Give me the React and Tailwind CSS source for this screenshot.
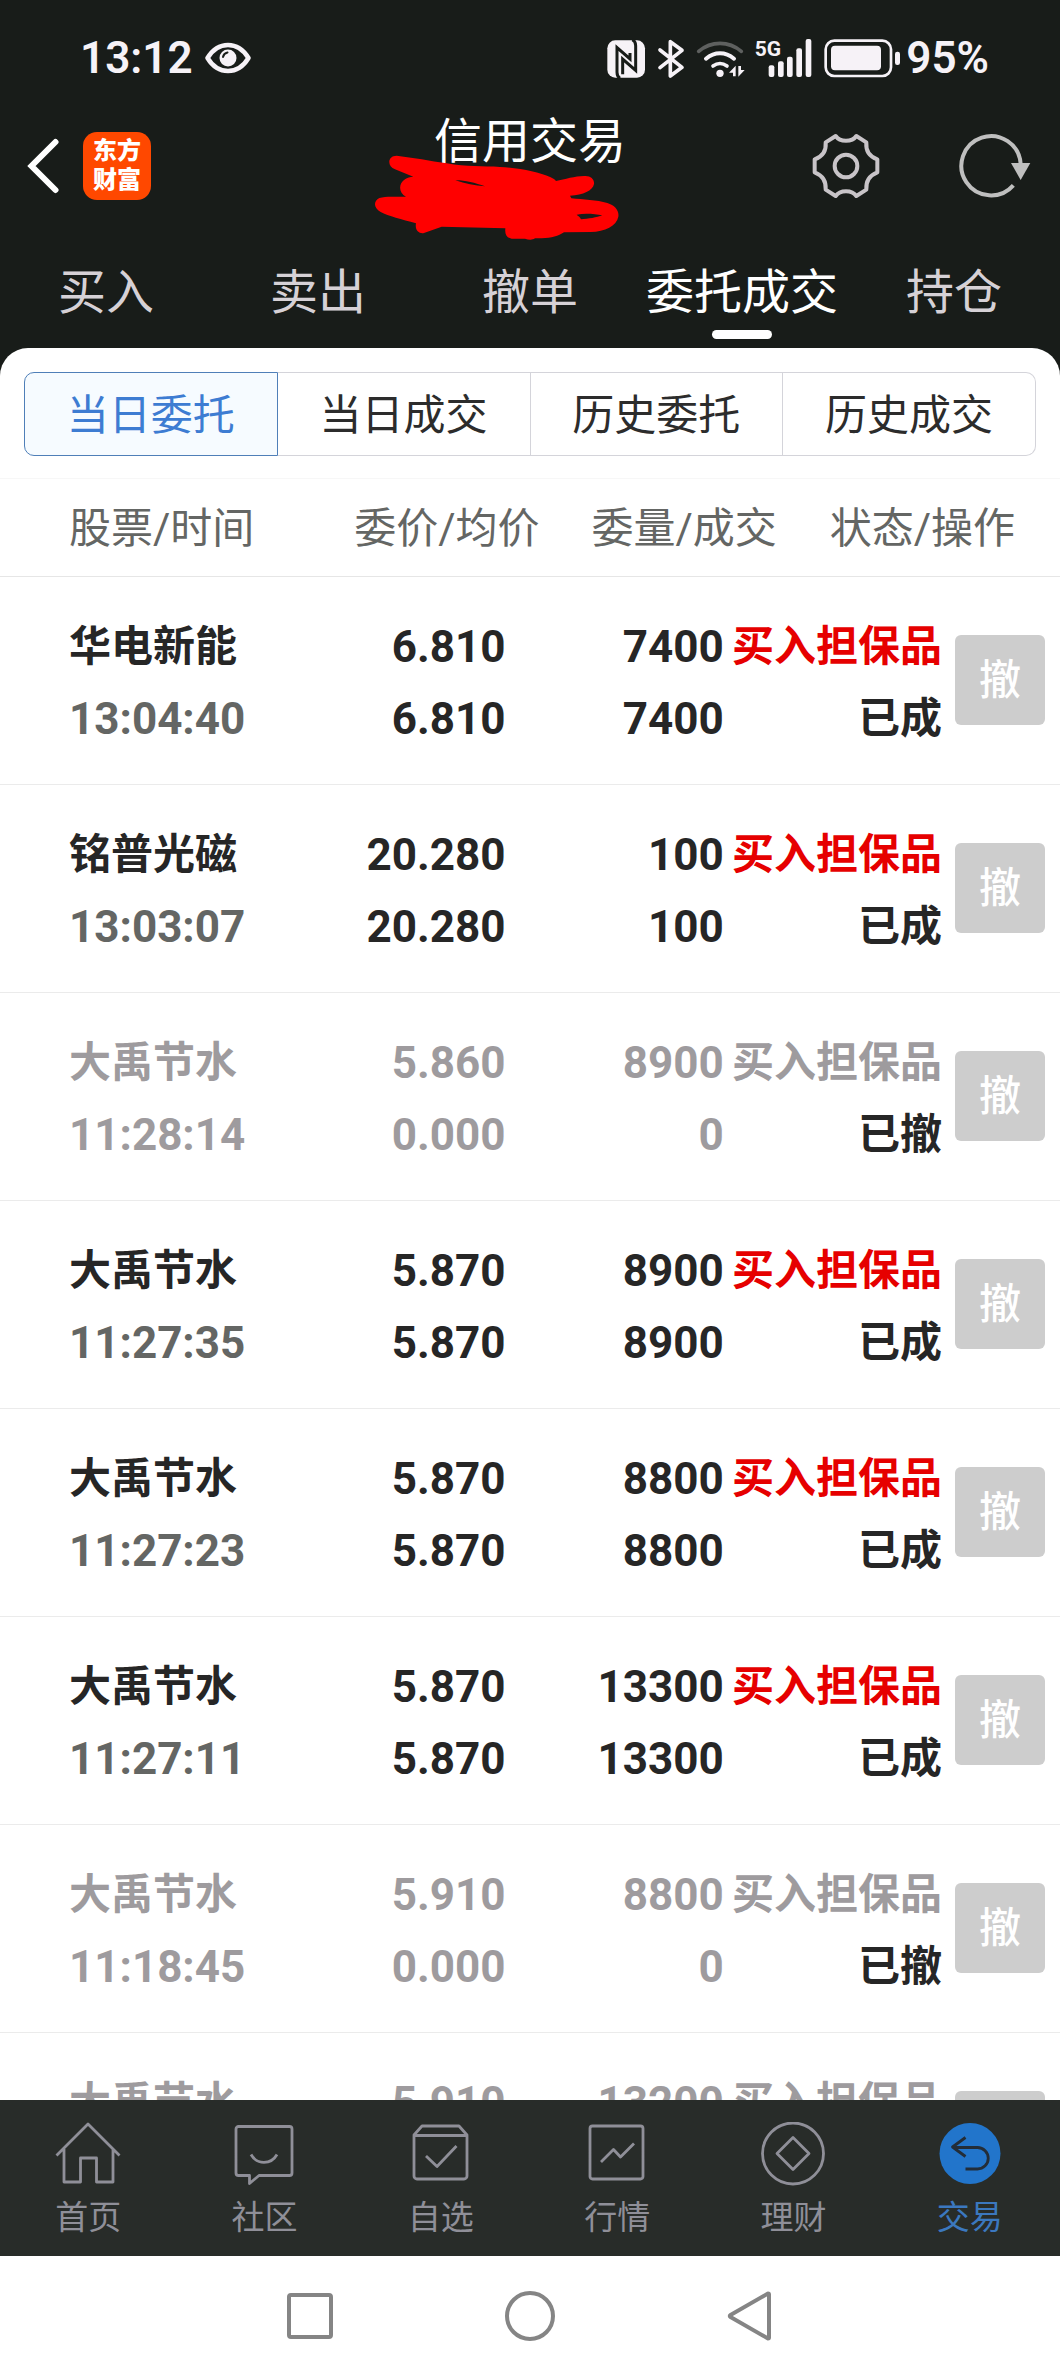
import React from "react";

const tabs = ["买入", "卖出", "撤单", "委托成交", "持仓"];
const segments = ["当日委托", "当日成交", "历史委托", "历史成交"];
const columns = ["股票/时间", "委价/均价", "委量/成交", "状态/操作"];

const orders = [
  { name: "华电新能", time: "13:04:40", price: "6.810", avg: "6.810", qty: "7400", filled: "7400", status: "已成" },
  { name: "铭普光磁", time: "13:03:07", price: "20.280", avg: "20.280", qty: "100", filled: "100", status: "已成" },
  { name: "大禹节水", time: "11:28:14", price: "5.860", avg: "0.000", qty: "8900", filled: "0", status: "已撤" },
  { name: "大禹节水", time: "11:27:35", price: "5.870", avg: "5.870", qty: "8900", filled: "8900", status: "已成" },
  { name: "大禹节水", time: "11:27:23", price: "5.870", avg: "5.870", qty: "8800", filled: "8800", status: "已成" },
  { name: "大禹节水", time: "11:27:11", price: "5.870", avg: "5.870", qty: "13300", filled: "13300", status: "已成" },
  { name: "大禹节水", time: "11:18:45", price: "5.910", avg: "0.000", qty: "8800", filled: "0", status: "已撤" },
  { name: "大禹节水", price: "5.910", qty: "13200", cancelled: true },
];

function StatusBar() {
  return (
    <div className="flex h-[116px] items-center justify-between pl-20 pr-[71px] text-[44px] font-semibold leading-[52px] text-[#f6f2f7]">
      <div className="flex items-center gap-3">
        <span>13:12</span>
        <svg className="h-8 w-[46px]" viewBox="0 0 46 32" fill="none">
          <path d="M2.500 16C8 7 15 3 23 3s15 4 20.500 13C38 25 31 29 23 29S8 25 2.500 16Z" stroke="currentColor" strokeWidth="4.500" strokeLinejoin="round" />
          <circle cx="23" cy="16" r="8.500" fill="currentColor" />
          <path d="M18 15c.500-2.500 2-4 4.500-4.500" stroke="#181c19" strokeWidth="2" strokeLinecap="round" />
        </svg>
      </div>
      <div className="flex items-center">
        <svg className="h-[45px] w-[206px]" viewBox="18 31 618 135" fill="none">
          <rect x="22" y="44" width="113" height="112" rx="24" fill="currentColor" />
          <path d="M60 158C53 154 51 150 51 140V66L90 100V82" stroke="#181c19" strokeWidth="9" />
          <path d="M97 42c8 4 10 8 10 18v74L68 100v46" stroke="#181c19" strokeWidth="9" />
          <path d="M180 73l66 52-35 26V48l35 26-66 52" stroke="currentColor" strokeWidth="11" strokeLinecap="round" strokeLinejoin="round" />
          <path d="M296 77c38-32 90-32 128 0" stroke="#5e605f" strokeWidth="11" strokeLinecap="round" />
          <path d="M318 99c26-22 58-22 84 0" stroke="currentColor" strokeWidth="12" strokeLinecap="round" />
          <path d="M339 121c14-10 28-10 42 0" stroke="currentColor" strokeWidth="11" strokeLinecap="round" />
          <circle cx="360" cy="143" r="11" fill="currentColor" />
          <path d="M387 141l20-21v32h-8v-11zM434 133l-19 20v-32h8v12z" fill="currentColor" />
          <g fill="currentColor">
            <rect x="506" y="119" width="17" height="35" rx="6" />
            <rect x="534" y="107" width="17" height="47" rx="6" />
            <rect x="561" y="93" width="17" height="61" rx="6" />
            <rect x="589" y="68" width="17" height="86" rx="6" />
            <rect x="617" y="40" width="17" height="114" rx="6" />
          </g>
          <text x="464" y="92" fill="currentColor" fontFamily="Roboto, sans-serif" fontSize="63" fontWeight="700">5G</text>
        </svg>
        <svg className="ml-3 h-[39px] w-[78px]" viewBox="18 40 234 117" fill="none">
          <rect x="23" y="45" width="196" height="106" rx="26" stroke="currentColor" strokeWidth="8" />
          <rect x="39" y="60" width="150" height="74" rx="12" fill="currentColor" />
          <rect x="231" y="78" width="15" height="40" rx="7" fill="currentColor" />
        </svg>
        <span className="ml-1">95%</span>
      </div>
    </div>
  );
}

function TitleBar() {
  return (
    <header className="grid h-[100px] grid-cols-[1fr_auto_1fr] items-center px-[27px]">
      <div className="flex items-center gap-6">
        <button type="button" aria-label="返回" className="text-white">
          <svg className="h-14 w-8" viewBox="0 0 32 56" fill="none" stroke="currentColor" strokeWidth="6" strokeLinecap="round" strokeLinejoin="miter">
            <path d="M28.500 4L4.500 28l24 24" />
          </svg>
        </button>
        <a href="#home" className="flex size-[68px] items-center justify-center rounded-[14px] bg-[#ff4800] text-center text-2xl font-black leading-[29px] text-white">
          <span>东方<br />财富</span>
        </a>
      </div>
      <div className="relative self-start">
        <h1 className="text-[48px] font-normal leading-[52px] text-white">信用交易</h1>
        <svg className="absolute left-1/2 top-[38px] h-[88px] w-[246px] -translate-x-[156px]" viewBox="72 162 738 264" aria-hidden="true">
          <path
            fill="#ff0000"
            fillRule="evenodd"
            d="M140 167C190 173 240 182 290 190C350 201 400 198 450 201C510 204 565 216 602 232C610 236 615 239 618 243C645 238 675 228 702 228C722 226 734 238 732 252C728 272 700 285 660 287L664 295C700 299 740 300 772 309C795 316 808 332 805 350C800 378 765 395 722 396L642 397C625 408 605 414 575 415L555 415C545 422 535 419 525 416L485 416C470 414 464 404 466 385L275 380L222 399C208 402 194 392 198 370C155 358 115 348 92 336C70 324 70 303 88 294C110 287 145 292 168 290C145 278 145 250 165 238C172 233 180 231 190 230L135 208C110 198 113 167 140 167ZM316 241C345 252 375 256 405 259C375 248 340 240 316 241ZM680 344C705 339 735 342 757 346C740 352 715 357 693 358C690 350 684 348 680 344Z"
          />
        </svg>
      </div>
      <div className="flex items-center justify-end gap-[75px] text-[#c8c4c8]">
        <button type="button" aria-label="设置">
          <svg className="h-[68px] w-[72px]" viewBox="29 36 216 204" fill="none" stroke="currentColor" strokeWidth="12" strokeLinejoin="round">
            <path d="M168 48L198 67C196 92 208 110 231 118L231 157C208 166 196 184 198 209L168 228C155 209 119 209 106 228L76 209C78 184 66 166 43 157L43 118C66 110 78 92 76 67L106 48C119 67 155 67 168 48Z" />
            <circle cx="137" cy="138" r="34" />
          </svg>
        </button>
        <button type="button" aria-label="刷新" className="text-[#bfbfbf]">
          <svg className="h-[68px] w-[76px]" viewBox="470 36 228 204" fill="none">
            <path d="M661 132A89 89 0 1 0 639 196" stroke="currentColor" strokeWidth="12" />
            <path d="M632 129h58l-29 51z" fill="currentColor" />
          </svg>
        </button>
      </div>
    </header>
  );
}

function Tabs() {
  return (
    <nav className="grid h-[132px] grid-cols-5 pt-[50px]">
      {tabs.map((t) => {
        const active = t === "委托成交";
        return (
          <a
            key={t}
            href="#tab"
            className={`flex flex-col items-center text-[48px] leading-[54px] ${active ? "text-white" : "text-[#d6d1d6]"}`}
          >
            {t}
            {active && <span className="mt-[10px] h-[9px] w-[60px] rounded-full bg-white" />}
          </a>
        );
      })}
    </nav>
  );
}

function Segments() {
  return (
    <div className="px-6 pb-[22px] pt-6">
      <div className="flex h-[84px]">
        {segments.map((s, i) => (
          <button
            key={s}
            type="button"
            className={`flex-1 border pt-[3px] text-[42px] leading-[50px] first:rounded-l-[10px] last:rounded-r-[10px] ${
              i === 0
                ? "border-[#4f7fb8] bg-[#f6fbff] text-[#3d7cd2]"
                : "border-l-0 border-[#d4d4da] text-[#2c2c2c]"
            }`}
          >
            {s}
          </button>
        ))}
      </div>
    </div>
  );
}

function OrderRow({ order }) {
  const dim = order.status === "已撤" || order.cancelled;
  const tone = dim ? "text-[#9e9b9e]" : "text-[#262626]";
  return (
    <tr className="grid h-52 shrink-0 grid-cols-[repeat(4,minmax(0,1fr))_103px] border-b border-[#ebebeb] pl-[69px] pr-[15px] pt-[34px] text-right text-[44px] font-bold leading-[72px]">
      <td className="text-left">
        <div className={`text-[42px] ${tone}`}>{order.name}</div>
        <div className={dim ? "text-[#9e9b9e]" : "text-[#646664]"}>{order.time}</div>
      </td>
      <td className={tone}>
        <div>{order.price}</div>
        <div>{order.avg}</div>
      </td>
      <td className={tone}>
        <div>{order.qty}</div>
        <div>{order.filled}</div>
      </td>
      <td className="whitespace-nowrap text-[42px]">
        <div className={dim ? "text-[#9e9b9e]" : "text-[#e60000]"}>买入担保品</div>
        <div className="text-[#262626]">{order.status}</div>
      </td>
      <td className="flex items-start justify-end pt-6">
        <button type="button" className="size-[90px] rounded-md bg-[#cdcdcd] pt-[2px] text-[42px] font-medium leading-[88px] text-white">
          撤
        </button>
      </td>
    </tr>
  );
}

function OrderTable() {
  return (
    <table className="flex min-h-0 flex-1 flex-col overflow-hidden">
      <thead className="block">
        <tr className="grid h-[99px] grid-cols-[233fr_237fr_237fr_238fr] items-center border-b border-t border-b-[#e6e6e6] border-t-[#f7f7f7] pl-[69px] pr-[45px] pt-[3px] text-right text-[42px] leading-[50px] text-[#646664]">
          {columns.map((c) => (
            <th key={c} scope="col" className="whitespace-nowrap font-normal first:text-left">
              {c}
            </th>
          ))}
        </tr>
      </thead>
      <tbody className="flex min-h-0 flex-1 flex-col overflow-hidden">
        {orders.map((o, i) => (
          <OrderRow key={i} order={o} />
        ))}
      </tbody>
    </table>
  );
}

const navItems = [
  {
    label: "首页",
    icon: <path d="M1.500 33.500L33 2l31.500 31.500M9 27v33h16.500V36h16v24H58V27" />,
  },
  {
    label: "社区",
    icon: <path d="M7.500 4.500h51a2.500 2.500 0 0 1 2.500 2.500v44a2.500 2.500 0 0 1-2.500 2.500H28l-9.500 8v-8h-11A2.500 2.500 0 0 1 5 51V7a2.500 2.500 0 0 1 2.500-2.500ZM20 32.500c6 10.500 20 10.500 26 0" />,
  },
  {
    label: "自选",
    icon: <path d="M6 13l8-9h37l8 9v41a3 3 0 0 1-3 3H9a3 3 0 0 1-3-3ZM6 13.500h53M18 34l11 10.500L48.500 24" />,
  },
  {
    label: "行情",
    icon: <path d="M8.500 4h48a2.500 2.500 0 0 1 2.500 2.500v48a2.500 2.500 0 0 1-2.500 2.500h-48A2.500 2.500 0 0 1 6 54.500v-48A2.500 2.500 0 0 1 8.500 4ZM17 40l12.500-12.500 7 7.500L50 21.500" />,
  },
  {
    label: "理财",
    icon: (
      <>
        <circle cx="33" cy="31.500" r="30.500" />
        <path d="M33 15.500l16 16-16 16-16-16z" />
      </>
    ),
  },
  {
    label: "交易",
    active: true,
    icon: (
      <>
        <circle cx="33" cy="31.500" r="30.500" fill="#2275cb" stroke="none" />
        <path d="M28.500 15.500L15.500 25l13 9.500M16 25.500h24.500a10.500 10.500 0 0 1 0 21.500H28.500" stroke="#232d38" />
      </>
    ),
  },
];

function BottomNav() {
  return (
    <nav className="grid h-[156px] shrink-0 grid-cols-6 bg-[#282c29] pr-[2px] pt-[22px]">
      {navItems.map((n) => (
        <a
          key={n.label}
          href="#nav"
          className={`flex flex-col items-center gap-2 text-[33px] leading-[48px] ${n.active ? "text-[#3b78bf]" : "text-[#8f8f98]"}`}
        >
          <svg className="h-16 w-[66px]" viewBox="0 0 66 64" fill="none" stroke="currentColor" strokeWidth="2.800" strokeLinejoin="round">
            {n.icon}
          </svg>
          {n.label}
        </a>
      ))}
    </nav>
  );
}

function SystemNav() {
  return (
    <div className="flex h-[120px] shrink-0 items-center justify-center gap-[168px] bg-white text-[#858585]">
      <button type="button" aria-label="最近任务">
        <svg className="size-[52px]" viewBox="0 0 52 52" fill="none" stroke="currentColor" strokeWidth="4">
          <rect x="5" y="5" width="42" height="42" rx="2" />
        </svg>
      </button>
      <button type="button" aria-label="主屏幕">
        <svg className="size-[52px]" viewBox="0 0 52 52" fill="none" stroke="currentColor" strokeWidth="4">
          <circle cx="26" cy="26" r="23" />
        </svg>
      </button>
      <button type="button" aria-label="返回上一级">
        <svg className="size-[52px]" viewBox="0 0 52 52" fill="none" stroke="currentColor" strokeWidth="4" strokeLinejoin="round">
          <path d="M44 3.500q1 0 1 1v43q0 1-1 1L6.500 27q-1.500-1 0-2Z" />
        </svg>
      </button>
    </div>
  );
}

export default function App() {
  return (
    <div className="flex h-screen flex-col bg-[#181c19] font-[Roboto,'Noto_Sans_CJK_SC',sans-serif]">
      <StatusBar />
      <TitleBar />
      <Tabs />
      <main className="flex min-h-0 flex-1 flex-col overflow-hidden rounded-t-[28px] bg-white">
        <Segments />
        <OrderTable />
      </main>
      <BottomNav />
      <SystemNav />
    </div>
  );
}
